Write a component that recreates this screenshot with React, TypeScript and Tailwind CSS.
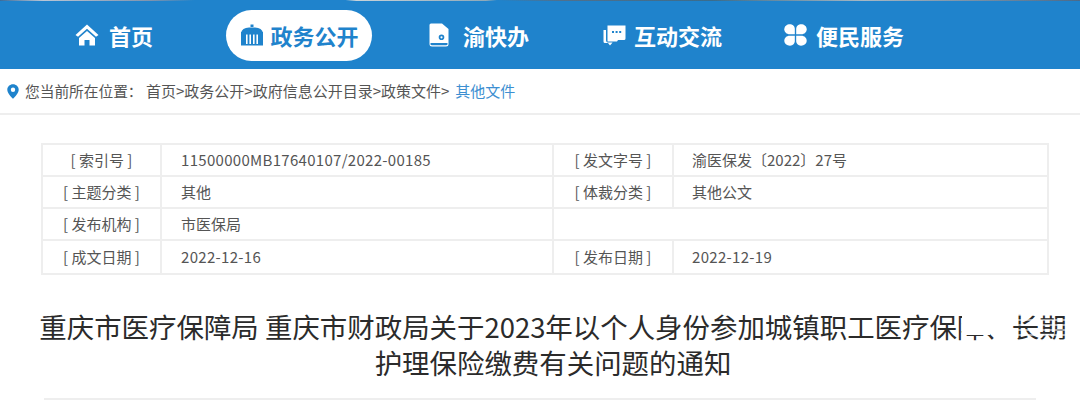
const FONT = "font-['Microsoft_YaHei','Noto_Sans_CJK_SC','Liberation_Sans',sans-serif]";

function HomeIcon() {
  return (
    <svg width="24" height="22" viewBox="0 0 24 22" fill="white">
      <path d="M12 0.5 L23.5 11 L21 12.8 L12 4.8 L3 12.8 L0.5 11 Z" />
      <path d="M12 7 L20 14 V21.5 H14.5 V16 H9.5 V21.5 H4 V14 Z" />
    </svg>
  );
}

function GovIcon() {
  return (
    <svg width="24" height="22" viewBox="0 0 24 22" fill="#1f83cc">
      <path d="M10.5 0.5 H13.5 V3 H10.5 Z" />
      <path d="M1 9 Q2 4 9 3.6 H15 Q22 4 23 9 Z" />
      <path fillRule="evenodd" d="M1 8 H23 V21.5 H1 Z M6 10.5 V20 H7.6 V10.5 Z M9.4 10.5 V20 H11 V10.5 Z M13 10.5 V20 H14.6 V10.5 Z M16.4 10.5 V20 H18 V10.5 Z" />
    </svg>
  );
}

function BookIcon() {
  return (
    <svg width="20" height="24" viewBox="0 0 20 24" fill="white">
      <path fillRule="evenodd" d="M2 0.5 H13 L19.5 6 V21 Q19.5 23.5 17 23.5 H3 Q0.5 23.5 0.5 21 V2 Q0.5 0.5 2 0.5 Z M1.5 20 V21.5 Q1.5 22.3 3 22.3 H17 Q18.5 22.3 18.5 21.5 V20 Z M12.5 11.5 A2.8 2.8 0 1 0 12.5 17.1 A2.8 2.8 0 1 0 12.5 11.5 Z M12.5 13.2 A1.1 1.1 0 1 1 12.5 15.4 A1.1 1.1 0 1 1 12.5 13.2 Z" />
    </svg>
  );
}

function ChatIcon() {
  return (
    <svg width="23" height="21" viewBox="0 0 23 21" fill="white">
      <path fillRule="evenodd" d="M4.5 0.5 H22.5 V13.5 Q22.5 15 21 15 H15 L14 16.5 H4.5 Z M9 6 V8 H11 V6 Z M12.6 6 V8 H14.6 V6 Z M16.2 6 V8 H18.2 V6 Z" />
      <path d="M0.5 5 H3 V15 Q3 17.6 6 17.6 H9.6 L7 20.5 L5 18 H2 Q0.5 18 0.5 16.5 Z" />
    </svg>
  );
}

function CloverIcon() {
  return (
    <svg width="23" height="22" viewBox="0 0 23 22" fill="white">
      <path d="M6 0.3 C9 0.3 10.8 2.5 10.8 5 V10.2 H5.6 C2.5 10.2 0.3 8 0.3 5.2 C0.3 2.4 2.8 0.3 6 0.3 Z" />
      <path d="M17 0.3 C14 0.3 12.2 2.5 12.2 5 V10.2 H17.4 C20.5 10.2 22.7 8 22.7 5.2 C22.7 2.4 20.2 0.3 17 0.3 Z" />
      <path d="M6 21.7 C9 21.7 10.8 19.5 10.8 17 V11.8 H5.6 C2.5 11.8 0.3 14 0.3 16.8 C0.3 19.6 2.8 21.7 6 21.7 Z" />
      <path d="M17 21.7 C14 21.7 12.2 19.5 12.2 17 V11.8 H17.4 C20.5 11.8 22.7 14 22.7 16.8 C22.7 19.6 20.2 21.7 17 21.7 Z" />
    </svg>
  );
}

function PinIcon() {
  return (
    <svg width="12" height="15" viewBox="0 0 12 15" fill="#1f83cc">
      <path fillRule="evenodd" d="M6 0.3 C9.2 0.3 11.7 2.7 11.7 5.8 C11.7 9.2 8 12.8 6 14.8 C4 12.8 0.3 9.2 0.3 5.8 C0.3 2.7 2.8 0.3 6 0.3 Z M6 3.6 A2.2 2.2 0 1 0 6 8 A2.2 2.2 0 1 0 6 3.6 Z" />
    </svg>
  );
}

function Row({ a, b, c, d, last, latin }: { a: string; b: string; c?: string; d?: string; last?: boolean; latin?: boolean }) {
  return (
    <div className={`flex h-[32px] items-center text-[15px] text-[#555] ${last ? "" : "border-b-2 border-[#eeeeee]"}`}>
      <div className="flex h-full w-[119px] shrink-0 items-center justify-center border-r-2 border-[#eeeeee]">{a}</div>
      <div className={`flex h-full w-[392px] shrink-0 items-center pl-[19px] border-r-2 border-[#eeeeee] ${latin ? "tracking-[0.3px]" : ""}`}>{b}</div>
      {c ? (
        <>
          <div className="flex h-full w-[120px] shrink-0 items-center justify-center border-r-2 border-[#eeeeee]">{c}</div>
          <div className={`flex h-full flex-1 items-center pl-[18px] ${last ? "tracking-[0.3px]" : ""}`}>{d}</div>
        </>
      ) : null}
    </div>
  );
}

export default function App() {
  return (
    <div className={`relative h-[401px] w-[1080px] overflow-hidden bg-white ${FONT}`}>
      <div className="h-px bg-[linear-gradient(90deg,#3a6c9c_0,#b9c6d6_4%,#7f93ad_14%,#1f83cc_18%,#1f83cc_32%,#c9d3d9_33%,#8fa9b8_45%,#1f83cc_46%,#50708c_52%,#3a6c8c_66%,#a7b8c4_80%,#4a6a8a_100%)]" />
      <nav className="flex h-[68px] items-center bg-[#1f83cc] text-[22px] font-bold text-white">
        <div className="ml-[75px] flex items-center gap-[10px]">
          <HomeIcon />
          <span>首页</span>
        </div>
        <div className="ml-[73px] flex h-[51px] w-[146px] items-center justify-center gap-[7px] rounded-full bg-white text-[#1f83cc]">
          <GovIcon />
          <span>政务公开</span>
        </div>
        <div className="ml-[57px] flex items-center gap-[14px]">
          <BookIcon />
          <span>渝快办</span>
        </div>
        <div className="ml-[74px] flex items-center gap-[8px]">
          <ChatIcon />
          <span>互动交流</span>
        </div>
        <div className="ml-[62px] flex items-center gap-[9px]">
          <CloverIcon />
          <span>便民服务</span>
        </div>
      </nav>
      <div className="flex h-[46px] items-center whitespace-nowrap border-b-2 border-[#eeeeee] pl-[7px] text-[15px] text-[#555]">
        <PinIcon />
        <span className="ml-[6px] w-[121px] shrink-0 text-[14.7px]">您当前所在位置：</span>
        <span>首页&gt;政务公开&gt;政府信息公开目录&gt;政策文件&gt;</span>
        <span className="ml-[6px] text-[#3d8fd1]">其他文件</span>
      </div>
      <div className="ml-[41px] mt-[28px] w-[1008px] border-2 border-[#eeeeee]">
        <Row a="[ 索引号 ]" b="11500000MB17640107/2022-00185" latin c="[ 发文字号 ]" d="渝医保发〔2022〕27号" />
        <Row a="[ 主题分类 ]" b="其他" c="[ 体裁分类 ]" d="其他公文" />
        <Row a="[ 发布机构 ]" b="市医保局" />
        <Row a="[ 成文日期 ]" b="2022-12-16" latin c="[ 发布日期 ]" d="2022-12-19" last />
      </div>
      <h1 className="mt-[33px] pl-[26px] text-center text-[27.45px] font-normal leading-[36px] text-[#2b2b2b]">
        重庆市医疗保障局 重庆市财政局关于2023年以个人身份参加城镇职工医疗保障、长期
        <br />
        护理保险缴费有关问题的通知
      </h1>
      <div className="ml-[44px] mt-[18px] h-[2px] w-[992px] bg-[#eeeeee]" />
      <div className="absolute left-[962px] top-[311px] h-[24px] w-[28px] bg-white" />
      <div className="absolute left-[1013px] top-[311px] h-[30px] w-[54px] bg-[repeating-linear-gradient(0deg,rgba(255,255,255,0.55)_0,rgba(255,255,255,0.55)_2px,transparent_2px,transparent_5px)]" />
    </div>
  );
}
